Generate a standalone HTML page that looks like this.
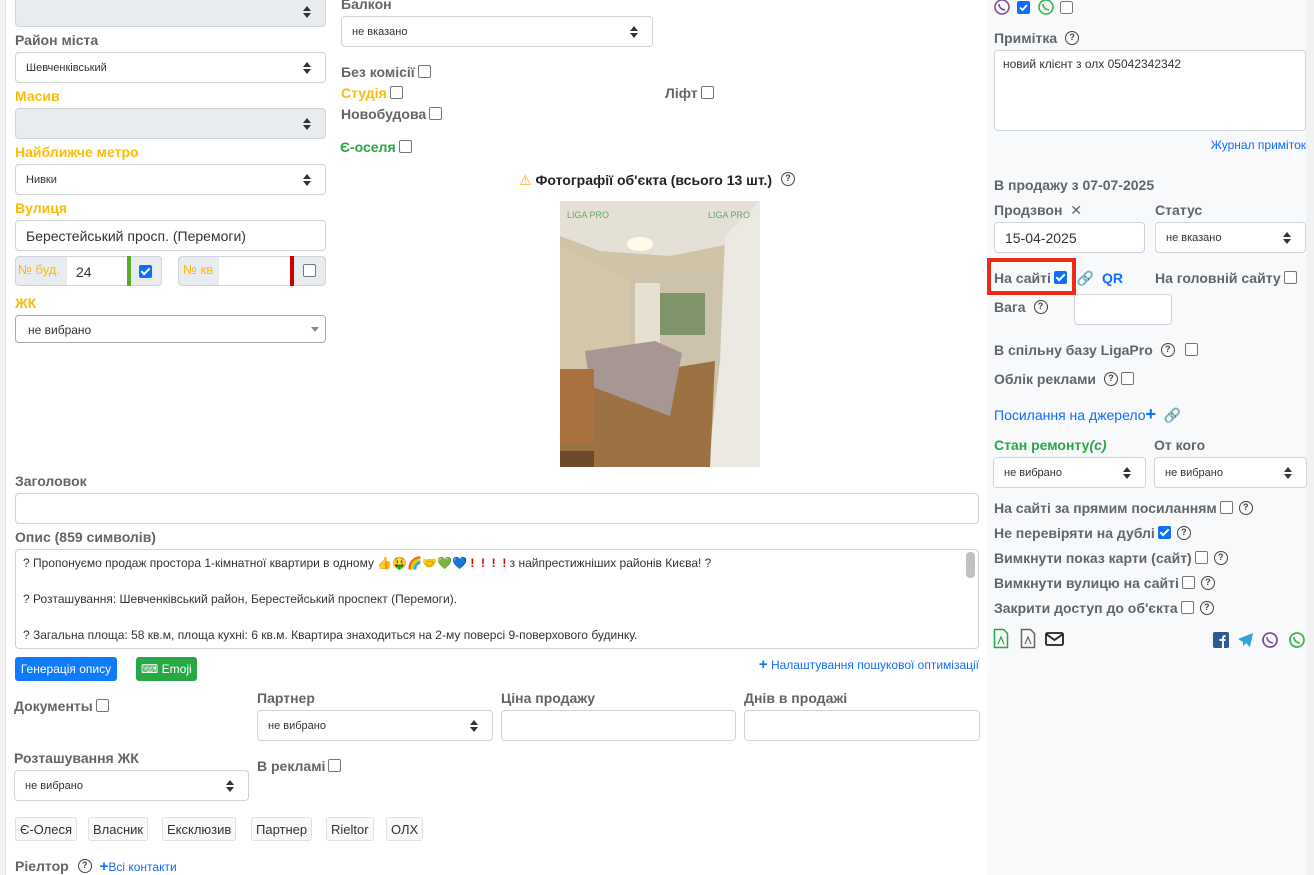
<!DOCTYPE html>
<html><head><meta charset="utf-8">
<style>
*{box-sizing:border-box;margin:0;padding:0}
body{width:1314px;height:875px;position:relative;overflow:hidden;background:#fff;font-family:"Liberation Sans","DejaVu Sans",sans-serif}
.a{position:absolute}
.l{position:absolute;font-weight:bold;font-size:14px;color:#62666a;white-space:nowrap;line-height:16px}
.y{color:#fbbc05}
.g{color:#28a745}
.sel{position:absolute;border:1px solid #ced4da;border-radius:4px;background:#fff;font-size:11px;color:#333;padding-left:10px;display:flex;align-items:center}
.sel.gr{background:#e9ecef}
.sel:after{content:"";position:absolute;right:14px;top:50%;margin-top:-6px;width:0;height:0;border-left:4px solid transparent;border-right:4px solid transparent;border-bottom:5px solid #333;}
.sel:before{content:"";position:absolute;right:14px;top:50%;margin-top:1px;width:0;height:0;border-left:4px solid transparent;border-right:4px solid transparent;border-top:5px solid #333;}
.inp{position:absolute;border:1px solid #ced4da;border-radius:4px;background:#fff;font-size:14px;color:#333;padding-left:10px;display:flex;align-items:center}
.cb{display:inline-block;width:13px;height:13px;border:1px solid #767676;border-radius:2px;background:#fff;vertical-align:-1px;margin-left:3px}
.ck{display:inline-block;width:13px;height:13px;border-radius:2px;background:#0d6efd;vertical-align:-1px;margin-left:3px;position:relative}
.ck:after{content:"";position:absolute;left:4px;top:1px;width:3px;height:7px;border:solid #fff;border-width:0 2px 2px 0;transform:rotate(45deg)}
.q{display:inline-block;width:14px;height:14px;border:1.5px solid #444;border-radius:50%;font-size:9px;text-align:center;line-height:11px;color:#444;font-weight:bold;vertical-align:top;margin-top:1px;margin-left:6px}
.tag{position:absolute;top:817px;height:24px;border:1px solid #dee2e6;border-radius:3px;background:#f8f9fa;font-size:13px;color:#333;padding:0 4px;display:flex;align-items:center}
.blue{color:#0d6efd}
</style></head><body>
<div class="a" style="left:0;top:0;width:6px;height:875px;background:#f2f3f5;border-right:1px solid #e3e4e6"></div>
<div class="a" style="left:987px;top:0;width:327px;height:875px;background:#f8f9fa"></div>
<div class="a" style="left:1306px;top:0;width:8px;height:875px;background:#f1f2f4"></div>

<div class="sel gr" style="left:15px;top:-4px;width:311px;height:31px"></div>
<div class="l" style="left:15px;top:32px">Район міста</div>
<div class="sel" style="left:15px;top:52px;width:311px;height:31px">Шевченківський</div>
<div class="l y" style="left:15px;top:88px">Масив</div>
<div class="sel gr" style="left:15px;top:108px;width:311px;height:31px"></div>
<div class="l y" style="left:15px;top:144px">Найближче метро</div>
<div class="sel" style="left:15px;top:164px;width:311px;height:31px">Нивки</div>
<div class="l y" style="left:15px;top:200px">Вулиця</div>
<div class="inp" style="left:15px;top:220px;width:311px;height:31px">Берестейський просп. (Перемоги)</div>
<div class="a" style="left:15px;top:256px;width:114px;height:30px;border:1px solid #ced4da;border-radius:4px;background:#e9ecef"></div>
<div class="a" style="left:18px;top:262px;font-size:13px;color:#fbbc05">№ буд.</div>
<div class="a" style="left:67px;top:256px;width:60px;height:30px;background:#fff;border-top:1px solid #ced4da;border-bottom:1px solid #ced4da;font-size:14px;color:#333;padding:7px 0 0 9px">24</div>
<div class="a" style="left:127px;top:256px;width:4px;height:30px;background:#5aac28"></div>
<div class="a" style="left:131px;top:256px;width:31px;height:30px;background:#e9ecef;border:1px solid #ced4da;border-left:0;border-radius:0 4px 4px 0"></div>
<span class="ck a" style="left:139px;top:264px;margin:0"></span>
<div class="a" style="left:178px;top:256px;width:148px;height:30px;border:1px solid #ced4da;border-radius:4px;background:#e9ecef"></div>
<div class="a" style="left:183px;top:262px;font-size:13px;color:#fbbc05">№ кв</div>
<div class="a" style="left:219px;top:256px;width:71px;height:30px;background:#fff;border-top:1px solid #ced4da;border-bottom:1px solid #ced4da"></div>
<div class="a" style="left:290px;top:256px;width:4px;height:30px;background:#c00"></div>
<span class="cb a" style="left:303px;top:264px;margin:0"></span>
<div class="l y" style="left:15px;top:295px">ЖК</div>
<div class="a" style="left:15px;top:315px;width:311px;height:28px;border:1px solid #aaa;border-radius:4px;background:#fff;font-size:12px;color:#333;padding:7px 0 0 12px">не вибрано<span style="position:absolute;right:6px;top:11px;border-left:4px solid transparent;border-right:4px solid transparent;border-top:5px solid #888"></span></div>

<div class="l" style="left:341px;top:-4px">Балкон</div>
<div class="sel" style="left:341px;top:16px;width:312px;height:31px">не вказано</div>
<div class="l" style="left:341px;top:64px">Без комісії<span class="cb"></span></div>
<div class="l y" style="left:341px;top:85px">Студія<span class="cb"></span></div>
<div class="l" style="left:665px;top:85px">Ліфт<span class="cb"></span></div>
<div class="l" style="left:341px;top:106px">Новобудова<span class="cb"></span></div>
<div class="l g" style="left:340px;top:139px">Є-оселя<span class="cb"></span></div>
<div class="a" style="left:519px;top:172px;font-size:14px;font-weight:bold;color:#222;white-space:nowrap;line-height:16px"><span style="color:#f7b500">&#9888;</span> Фотографії об'єкта (всього 13 шт.)<span class="q" style="margin-left:9px;margin-top:0">?</span></div>
<svg class="a" style="left:560px;top:201px" width="200" height="266" viewBox="0 0 200 266">
<rect width="200" height="266" fill="#cfc3a8"/>
<polygon points="0,0 200,0 185,40 110,55 40,50 0,35" fill="#e4e0d6"/>
<polygon points="0,45 70,80 72,220 0,240" fill="#d4c7aa"/>
<polygon points="70,75 165,70 165,165 70,165" fill="#cdc3ac"/>
<rect x="100" y="92" width="45" height="42" fill="#7f9468"/>
<rect x="75" y="82" width="25" height="72" fill="#e6e0d0"/>
<polygon points="165,35 200,0 200,266 148,266 160,160" fill="#ece9e2"/>
<polygon points="0,185 155,160 150,266 0,266" fill="#9c7244"/>
<polygon points="25,150 95,140 122,152 110,215 30,185" fill="#a79692"/>
<rect x="0" y="168" width="34" height="75" fill="#a8713d"/>
<rect x="0" y="250" width="34" height="16" fill="#6d4a2a"/>
<ellipse cx="80" cy="43" rx="13" ry="7" fill="#fffbe8"/>
<text x="7" y="17" font-size="9" fill="#6aa86a" font-family="Liberation Sans">LIGA PRO</text>
<text x="148" y="17" font-size="9" fill="#6aa86a" font-family="Liberation Sans">LIGA PRO</text>
</svg>

<div class="l" style="left:15px;top:473px">Заголовок</div>
<div class="inp" style="left:15px;top:493px;width:964px;height:31px"></div>
<div class="l" style="left:15px;top:529px">Опис (859 символів)</div>
<div class="a" style="left:15px;top:549px;width:964px;height:100px;border:1px solid #ced4da;border-radius:4px;background:#fff;font-size:12px;color:#333;padding:7px 0 0 7px;line-height:12px">
<div>? Пропонуємо продаж простора 1-кімнатної квартири в одному <span style="color:#e7a300">👍🤑</span><span style="color:#e44">🌈</span><span style="color:#e7a300">🤝</span><span style="color:#3c3">💚</span><span style="color:#39f">💙</span><span style="color:#d00;font-weight:bold"> ! &nbsp;! &nbsp;! &nbsp;! </span> з найпрестижніших районів Києва! ?</div>
<div style="margin-top:24px">? Розташування: Шевченківський район, Берестейський проспект (Перемоги).</div>
<div style="margin-top:24px">? Загальна площа: 58 кв.м, площа кухні: 6 кв.м. Квартира знаходиться на 2-му поверсі 9-поверхового будинку.</div>
<div class="a" style="right:3px;top:2px;width:9px;height:26px;background:#c1c1c1;border-radius:4px"></div>
</div>
<div class="a" style="left:15px;top:657px;width:102px;height:24px;background:#0d7bfb;border-radius:3px;color:#fff;font-size:12px;text-align:center;line-height:24px">Генерація опису</div>
<div class="a" style="left:136px;top:657px;width:61px;height:24px;background:#28a745;border-radius:3px;color:#fff;font-size:12px;line-height:24px;padding-left:5px">⌨ Emoji</div>
<div class="a blue" style="right:335px;top:656px;font-size:12px"><b style="font-size:15px">+</b> Налаштування пошукової оптимізації</div>

<div class="l" style="left:14px;top:698px">Документы<span class="cb"></span></div>
<div class="l" style="left:257px;top:690px">Партнер</div>
<div class="sel" style="left:257px;top:710px;width:236px;height:31px">не вибрано</div>
<div class="l" style="left:501px;top:690px">Ціна продажу</div>
<div class="inp" style="left:501px;top:710px;width:235px;height:31px"></div>
<div class="l" style="left:744px;top:690px">Днів в продажі</div>
<div class="inp" style="left:744px;top:710px;width:236px;height:31px"></div>
<div class="l" style="left:14px;top:750px">Розташування ЖК</div>
<div class="sel" style="left:14px;top:770px;width:235px;height:31px">не вибрано</div>
<div class="l" style="left:257px;top:758px">В рекламі<span class="cb"></span></div>
<div class="tag" style="left:15px">Є-Олеся</div>
<div class="tag" style="left:88px">Власник</div>
<div class="tag" style="left:162px">Ексклюзив</div>
<div class="tag" style="left:251px">Партнер</div>
<div class="tag" style="left:326px">Rieltor</div>
<div class="tag" style="left:386px">ОЛХ</div>
<div class="l" style="left:15px;top:858px">Ріелтор<span class="q" style="margin-left:9px">?</span> <span class="blue" style="font-weight:normal;font-size:12px;margin-left:4px"><b style="font-size:15px">+</b>Всі контакти</span></div>

<svg class="a" style="left:994px;top:0" width="80" height="16" viewBox="0 0 80 16">
<circle cx="8" cy="7" r="7" fill="none" stroke="#7d51a0" stroke-width="1.6"/><path d="M5 4 q0 5 6 6" stroke="#7d51a0" stroke-width="1.6" fill="none"/>
<rect x="23" y="1" width="13" height="13" rx="2" fill="#0d6efd"/><path d="M26 7.5 l2.5 2.5 l4.5 -5" stroke="#fff" stroke-width="1.8" fill="none"/>
<circle cx="52" cy="7" r="7" fill="none" stroke="#3bb54a" stroke-width="1.6"/><path d="M49 4 q0 5 6 6" stroke="#3bb54a" stroke-width="1.6" fill="none"/>
<rect x="66.5" y="1.5" width="12" height="12" rx="2" fill="#fff" stroke="#767676"/>
</svg>
<div class="l" style="left:994px;top:30px">Примітка<span class="q" style="margin-left:8px">?</span></div>
<div class="a" style="left:994px;top:50px;width:312px;height:81px;border:1px solid #ced4da;border-radius:4px;background:#fff;font-size:12px;color:#333;padding:6px 0 0 8px">новий клієнт з олх 05042342342</div>
<div class="a blue" style="right:8px;top:138px;font-size:12px">Журнал приміток</div>
<div class="l" style="left:994px;top:177px">В продажу з 07-07-2025</div>
<div class="l" style="left:994px;top:202px">Продзвон &nbsp;✕</div>
<div class="l" style="left:1155px;top:202px">Статус</div>
<div class="inp" style="left:994px;top:222px;width:151px;height:31px">15-04-2025</div>
<div class="sel" style="left:1155px;top:222px;width:151px;height:31px">не вказано</div>
<div class="a" style="left:987px;top:258px;width:89px;height:37px;border:4px solid #ef2a17"></div>
<div class="l" style="left:994px;top:270px">На сайті<span class="ck"></span> <span class="blue" style="margin-left:6px">🔗&nbsp;&nbsp;QR</span></div>
<div class="l" style="left:1155px;top:270px">На головній сайту<span class="cb"></span></div>
<div class="l" style="left:994px;top:299px">Вага<span class="q" style="margin-left:8px">?</span></div>
<div class="inp" style="left:1074px;top:294px;width:98px;height:31px"></div>
<div class="l" style="left:994px;top:342px">В спільну базу LigaPro<span class="q" style="margin-left:8px">?</span> <span class="cb" style="margin-left:6px"></span></div>
<div class="l" style="left:994px;top:371px">Облік реклами<span class="q" style="margin-left:8px">?</span><span class="cb"></span></div>
<div class="a blue" style="left:994px;top:407px;font-size:14px">Посилання на джерело<b style="font-size:18px;line-height:14px">+</b> &nbsp;<b>🔗</b></div>
<div class="l g" style="left:994px;top:437px">Стан ремонту<i>(с)</i></div>
<div class="l" style="left:1154px;top:437px">От кого</div>
<div class="sel" style="left:993px;top:457px;width:153px;height:31px">не вибрано</div>
<div class="sel" style="left:1154px;top:457px;width:153px;height:31px">не вибрано</div>
<div class="l" style="left:994px;top:500px">На сайті за прямим посиланням<span class="cb"></span><span class="q">?</span></div>
<div class="l" style="left:994px;top:525px">Не перевіряти на дублі<span class="ck"></span><span class="q">?</span></div>
<div class="l" style="left:994px;top:550px">Вимкнути показ карти (сайт)<span class="cb"></span><span class="q">?</span></div>
<div class="l" style="left:994px;top:575px">Вимкнути вулицю на сайті<span class="cb"></span><span class="q">?</span></div>
<div class="l" style="left:994px;top:600px">Закрити доступ до об'єкта<span class="cb"></span><span class="q">?</span></div>
<svg class="a" style="left:993px;top:628px" width="316" height="22" viewBox="0 0 316 22">
<path d="M1.5 1.5 h9 l4 4 v14 h-13z" fill="none" stroke="#28a745" stroke-width="1.5"/><path d="M5 16 l3-7 l3 7" stroke="#28a745" stroke-width="1.2" fill="none"/>
<path d="M28.5 1.5 h9 l4 4 v14 h-13z" fill="none" stroke="#666" stroke-width="1.5"/><path d="M32 16 l3-7 l3 7" stroke="#666" stroke-width="1.2" fill="none"/>
<rect x="53" y="5" width="17" height="12" rx="1.5" fill="none" stroke="#222" stroke-width="1.8"/><path d="M53 6 l8.5 6 l8.5 -6" fill="none" stroke="#222" stroke-width="1.8"/>
<rect x="220" y="4" width="16" height="16" rx="2" fill="#2d5996"/><path d="M230 20 v-8 h2.5 M226.5 12 h6 M230 12 v-2 q0-2 2.5-2" stroke="#fff" stroke-width="2" fill="none"/>
<path d="M245 11 l15-6 l-3 14 l-4-4 l-3 3 v-4z" fill="#2ea3dc"/>
<circle cx="277" cy="12" r="7" fill="none" stroke="#7d51a0" stroke-width="1.8"/><path d="M274 9 q0 5 6 6" stroke="#7d51a0" stroke-width="1.6" fill="none"/>
<circle cx="304" cy="12" r="7" fill="none" stroke="#3bb54a" stroke-width="1.8"/><path d="M301 9 q0 5 6 6" stroke="#3bb54a" stroke-width="1.6" fill="none"/>
</svg>
</body></html>
